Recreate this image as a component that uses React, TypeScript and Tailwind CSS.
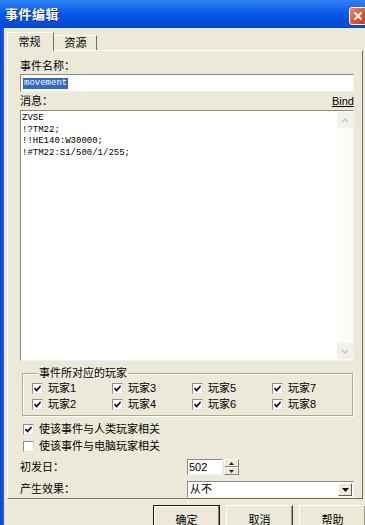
import React from "react";

const players = ["玩家1", "玩家3", "玩家5", "玩家7", "玩家2", "玩家4", "玩家6", "玩家8"];

const script = ["ZVSE", "!?TM22;", "!!HE140:W30000;", "!#TM22:S1/500/1/255;"];

function CheckBox({ checked }: { checked: boolean }) {
  return (
    <span className="flex h-[11px] w-[11px] shrink-0 items-center justify-center border border-t-[#8e8e8e] border-l-[#8e8e8e] border-r-[#e4e2d8] border-b-[#e4e2d8] bg-white">
      {checked && (
        <svg width="9" height="9" viewBox="0 0 9 9">
          <path d="M1.5 4.2 L3.6 6.4 L7.6 2" fill="none" stroke="#111" strokeWidth="1.8" />
        </svg>
      )}
    </span>
  );
}

function Button({ label, primary }: { label: string; primary?: boolean }) {
  return (
    <div
      className={
        primary
          ? "flex h-[23px] w-[67px] shrink-0 items-center justify-center border border-[#1a1a1a] bg-[#ece9d8] pt-[8px] shadow-[inset_-1px_-1px_0_#808080,inset_1px_1px_0_#ffffff]"
          : "flex h-[23px] w-[67px] shrink-0 items-center justify-center border border-t-white border-l-white border-r-[#404040] border-b-[#404040] bg-[#ece9d8] pt-[8px] shadow-[inset_-1px_-1px_0_#9d9a8e]"
      }
    >
      {label}
    </div>
  );
}

function SmallArrow({ up }: { up?: boolean }) {
  return (
    <svg width="5" height="3" viewBox="0 0 5 3">
      <path d={up ? "M0 3 L2.5 0 L5 3 Z" : "M0 0 L5 0 L2.5 3 Z"} fill="#222" />
    </svg>
  );
}

export default function App() {
  return (
    <div className="flex h-[525px] w-[365px] flex-col overflow-hidden bg-[#ece9d8] font-['Liberation_Sans','Noto_Sans_CJK_SC',sans-serif] text-[11px] text-black">
      {/* title bar */}
      <div className="flex h-[28px] shrink-0 items-center bg-linear-to-b from-[#2f82f7] via-[#0657e6] to-[#0348d6] pl-[5px]">
        <span className="font-['Noto_Sans_CJK_SC',sans-serif] text-[13px] font-bold tracking-[0.5px] text-white [text-shadow:1px_1px_0_#0b2a8c]">
          事件编辑
        </span>
        <div className="-mr-[2px] mt-[3px] ml-auto flex h-[18px] w-[18px] items-center justify-center rounded-[3px] border border-white bg-linear-to-br from-[#ea8b6a] via-[#dd5a36] to-[#c2381b]">
          <svg width="10" height="10" viewBox="0 0 10 10">
            <path d="M1.5 1.5 L8.5 8.5 M8.5 1.5 L1.5 8.5" stroke="#fff" strokeWidth="2" />
          </svg>
        </div>
      </div>

      <div className="flex min-h-0 flex-1">
        <div className="w-[4px] shrink-0 bg-linear-to-r from-[#0a3fd4] to-[#1a62ea]" />
        <div className="flex flex-1 flex-col pl-[3px] pt-[4px]">
          {/* tabs */}
          <div className="relative z-10 flex h-[18px] items-end">
            <div className="-mb-px flex h-[19px] w-[47px] items-center justify-center border border-b-0 border-t-white border-l-white border-r-[#716f64] bg-[#ece9d8] pr-[2px] text-[11px]">
              常规
            </div>
            <div className="flex h-[15px] w-[43px] items-center justify-center border border-b-0 border-t-white border-l-0 border-r-[#716f64] bg-[#ece9d8] pl-[1px] text-[11px]">
              资源
            </div>
          </div>

          {/* panel */}
          <div className="flex h-[456px] w-[356px] flex-col border border-t-white border-l-white border-r-[#716f64] border-b-[#716f64] pl-[12px] pr-[8px] pt-[8px]">
            <div className="h-[14px] leading-[14px]">事件名称：</div>
            <div className="mt-[1px] flex h-[18px] items-center border border-t-[#8a8a8a] border-l-[#8a8a8a] border-r-[#f2f1ea] border-b-[#f2f1ea] bg-white pl-[2px]">
              <span className="bg-[#316ac5] px-[1px] font-['Liberation_Mono',monospace] text-[9px] leading-[11px] text-white">
                movement
              </span>
            </div>

            <div className="mt-[2px] flex h-[14px] items-center justify-between leading-[14px]">
              <span>消息：</span>
              <span className="underline">Bind</span>
            </div>

            <div className="mt-[2px] flex h-[251px] border border-t-[#8a8a8a] border-l-[#8a8a8a] border-r-[#f2f1ea] border-b-[#f2f1ea] bg-white">
              <div className="flex-1 pl-[1px] pt-[2px] font-['Liberation_Mono',monospace] text-[9px] leading-[11.5px]">
                {script.map((line) => (
                  <div key={line} className="whitespace-pre">
                    {line}
                  </div>
                ))}
              </div>
              <div className="flex w-[16px] flex-col justify-between bg-[#fbfbf8] py-[1px]">
                <div className="flex h-[16px] items-center justify-center rounded-[2px] bg-[#f1f0ea]">
                  <svg width="8" height="5" viewBox="0 0 8 5">
                    <path d="M1 4 L4 1 L7 4" fill="none" stroke="#c2c3c9" strokeWidth="1.5" />
                  </svg>
                </div>
                <div className="flex h-[16px] items-center justify-center rounded-[2px] bg-[#f1f0ea]">
                  <svg width="8" height="5" viewBox="0 0 8 5">
                    <path d="M1 1 L4 4 L7 1" fill="none" stroke="#c2c3c9" strokeWidth="1.5" />
                  </svg>
                </div>
              </div>
            </div>

            {/* player group */}
            <fieldset className="mt-[5px] ml-[2px] mr-[1px] h-[50px] border border-[#aca899] pl-[9px] shadow-[1px_1px_0_#ffffff,inset_1px_1px_0_#ffffff]">
              <legend className="ml-[6px] px-[1px] leading-[14px]">事件所对应的玩家</legend>
              <div className="mt-[1px] grid grid-cols-[80px_80px_80px_80px] gap-y-[2px]">
                {players.map((p) => (
                  <div key={p} className="flex h-[14px] items-center gap-[5px]">
                    <CheckBox checked />
                    <span>{p}</span>
                  </div>
                ))}
              </div>
            </fieldset>

            <div className="mt-[6px] ml-[3px] flex h-[14px] items-center gap-[5px]">
              <CheckBox checked />
              <span>使该事件与人类玩家相关</span>
            </div>
            <div className="mt-[3px] ml-[3px] flex h-[14px] items-center gap-[5px]">
              <CheckBox checked={false} />
              <span>使该事件与电脑玩家相关</span>
            </div>

            <div className="mt-[6px] flex h-[16px] items-center">
              <span className="w-[167px]">初发日：</span>
              <div className="flex h-[16px] w-[36px] items-center border border-t-[#8a8a8a] border-l-[#8a8a8a] border-r-[#f2f1ea] border-b-[#f2f1ea] bg-white pl-[1px]">
                502
              </div>
              <div className="ml-[1px] flex h-[16px] w-[15px] flex-col">
                <div className="flex h-[8px] items-center justify-center border border-t-white border-l-white border-r-[#808080] border-b-[#808080] bg-[#ece9d8]">
                  <SmallArrow up />
                </div>
                <div className="flex h-[8px] items-center justify-center border border-t-white border-l-white border-r-[#808080] border-b-[#808080] bg-[#ece9d8]">
                  <SmallArrow />
                </div>
              </div>
            </div>

            <div className="mt-[6px] flex h-[17px] items-center">
              <span className="w-[167px]">产生效果：</span>
              <div className="flex h-[17px] flex-1 items-center border border-t-[#8a8a8a] border-l-[#8a8a8a] border-r-[#f2f1ea] border-b-[#f2f1ea] bg-white pl-[2px]">
                <span className="flex-1">从不</span>
                <div className="mr-[1px] flex h-[13px] w-[14px] items-center justify-center border border-t-white border-l-white border-r-[#606060] border-b-[#606060] bg-[#ece9d8]">
                  <svg width="7" height="4" viewBox="0 0 7 4">
                    <path d="M0 0 L7 0 L3.5 4 Z" fill="#111" />
                  </svg>
                </div>
              </div>
            </div>
          </div>

          {/* buttons */}
          <div className="mt-[6px] flex gap-[6px] pl-[146px]">
            <Button label="确定" primary />
            <Button label="取消" />
            <Button label="帮助" />
          </div>
        </div>
      </div>
    </div>
  );
}
